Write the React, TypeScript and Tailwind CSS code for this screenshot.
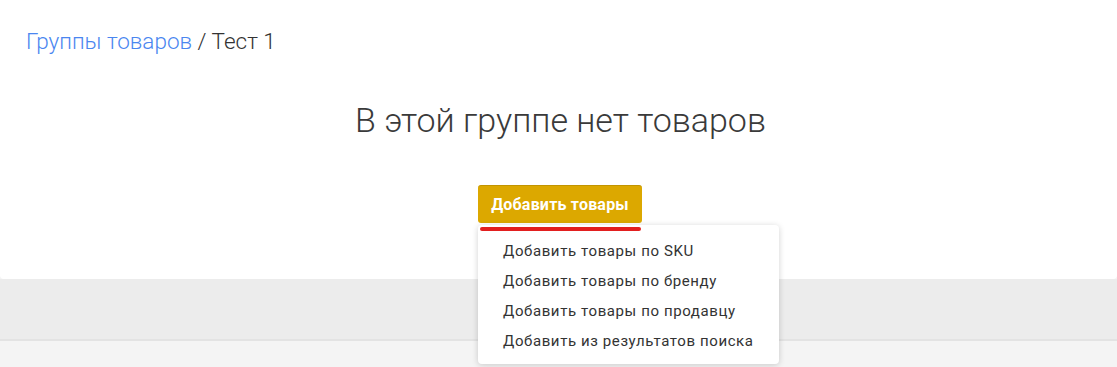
import React from "react";

export default function App() {
  const items = [
    "Добавить товары по SKU",
    "Добавить товары по бренду",
    "Добавить товары по продавцу",
    "Добавить из результатов поиска",
  ];
  return (
    <div className="w-[1117px] h-[367px] overflow-hidden bg-[#f4f4f4] font-['Roboto',sans-serif]">
      <div className="h-[279px] bg-white rounded-b-[4px] flex flex-col">
        <div className="pl-[26px] pt-[26px] text-[22.5px] font-light leading-[30px] text-[#333]">
          <span className="text-[#4a86f0]">Группы товаров</span>
          <span> / Тест 1</span>
        </div>
        <div className="mt-[44px] text-center text-[34px] font-light leading-[40px] text-[#3a3a3a] pl-[4px]">
          В этой группе нет товаров
        </div>
        <div className="mt-[45px] flex justify-center">
          <div className="relative ml-[3px]">
            <button className="h-[38px] w-[164px] rounded-[3px] bg-[#dca800] border-t border-[#c29400] text-white text-[16px] font-bold tracking-[0.2px]">
              Добавить товары
            </button>
            <div className="absolute left-0 top-[40px] w-[301px] h-[139px] bg-white rounded-[4px] shadow-[0_1px_6px_rgba(0,0,0,0.18)] pt-[11px] z-10">
              {items.map((t) => (
                <div key={t} className="pl-[25px] h-[30px] leading-[30px] text-[15px] text-[#333] tracking-[0.6px]">
                  {t}
                </div>
              ))}
            </div>
            <div className="absolute left-[2px] top-[42px] h-[4px] w-[161px] rounded-full bg-[#e21f1f] z-20" />
          </div>
        </div>
      </div>
      <div className="h-[62px] bg-[#ececec] border-b-2 border-[#e3e3e3]" />
    </div>
  );
}
